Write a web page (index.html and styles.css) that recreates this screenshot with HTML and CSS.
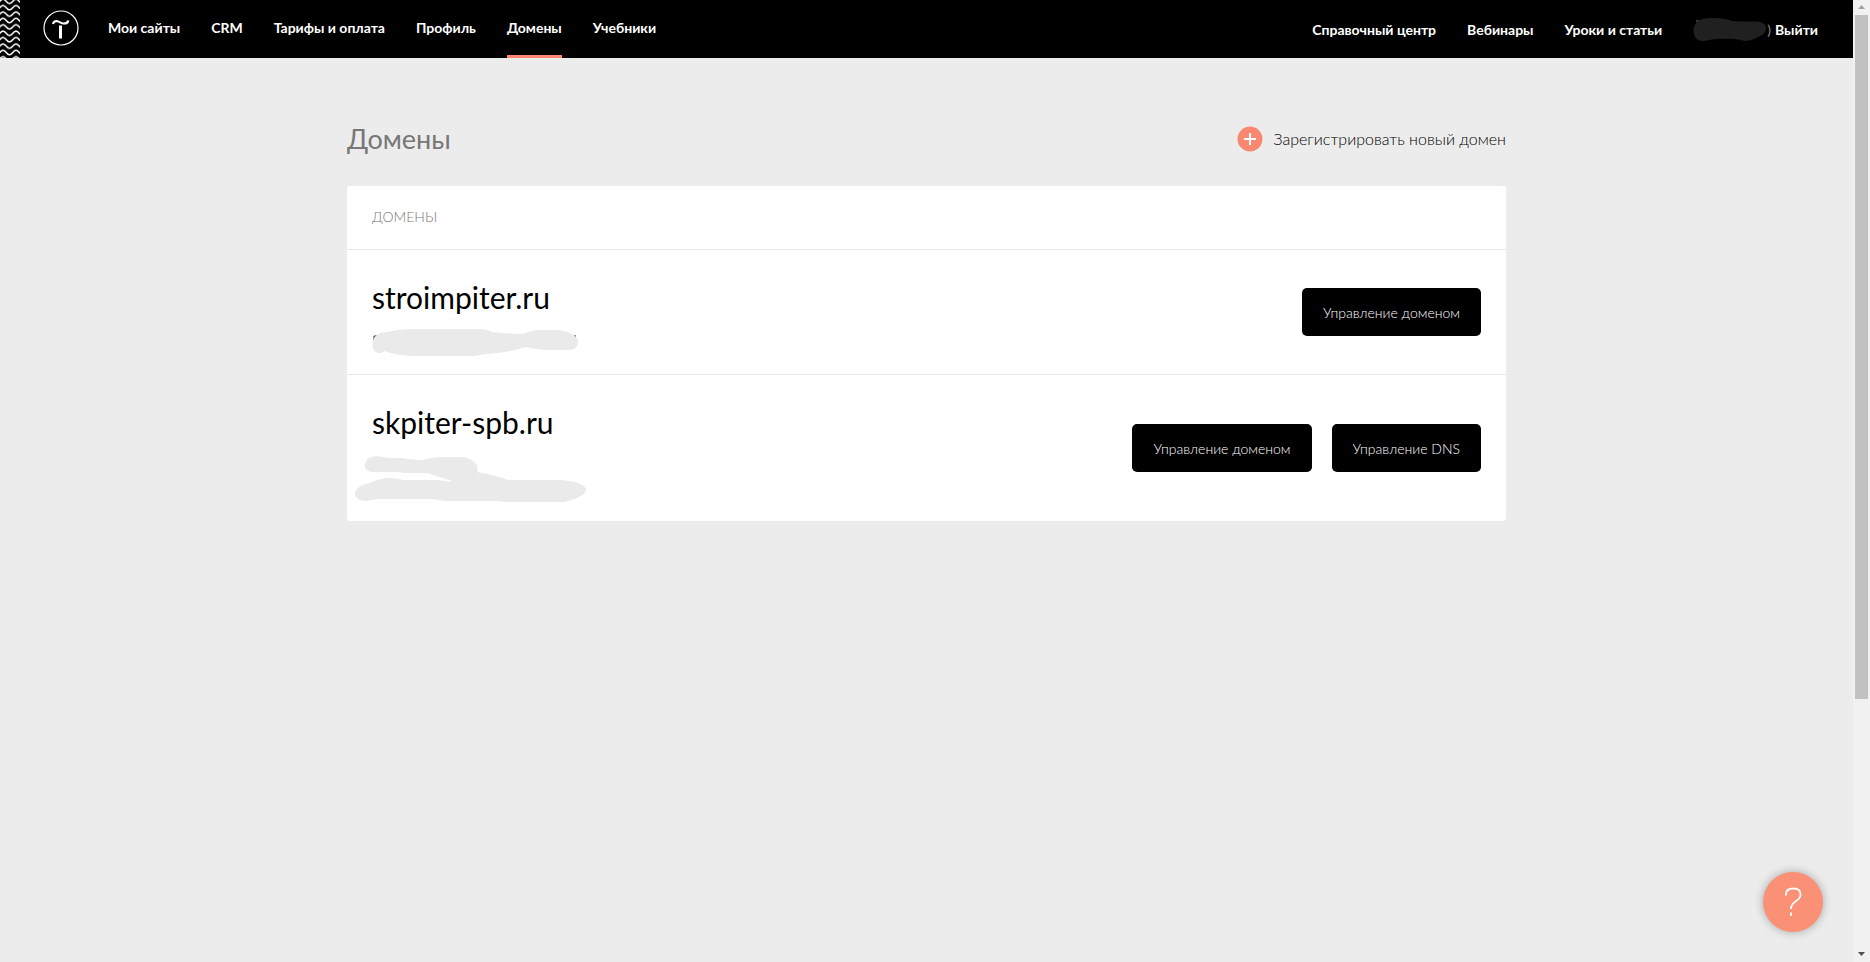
FILE: index.html
```
<!DOCTYPE html>
<html lang="ru">
<head>
<meta charset="utf-8">
<meta name="viewport" content="width=device-width, initial-scale=1">
<title>Домены</title>
<link rel="stylesheet" href="styles.css">
</head>
<body>
<div class="page">
  <header class="header">
    <svg class="header-waves" width="20" height="58" aria-hidden="true">
      <defs>
        <pattern id="waves" width="13" height="6.4" patternUnits="userSpaceOnUse" patternTransform="translate(3 4.500)">
          <path d="M0 1C3.200 1 3.300 5.400 6.500 5.400S9.800 1 13 1" fill="none" stroke="#fff" stroke-width="1.5"/>
        </pattern>
      </defs>
      <rect width="20" height="58" fill="url(#waves)"/>
    </svg>
    <a class="logo" href="#" aria-label="Главная">
      <svg width="36" height="36" viewBox="0 0 36 36" fill="none" stroke="#fff">
        <circle cx="18" cy="18" r="17" stroke-width="1.2"/>
        <path d="M10 14 C10.500 11.500 12.500 10.800 14.500 11.300 C17 12 18.500 13.700 21 13.500 C23.500 13.500 25 12.500 25.300 10.500" stroke-width="2.2"/>
        <path d="M17.500 15.500V28.500" stroke-width="3"/>
      </svg>
    </a>
    <nav class="nav nav-main">
      <a href="#">Мои сайты</a>
      <a href="#">CRM</a>
      <a href="#">Тарифы и оплата</a>
      <a href="#">Профиль</a>
      <a class="active" href="#">Домены</a>
      <a href="#">Учебники</a>
    </nav>
    <nav class="nav nav-side">
      <a href="#">Справочный центр</a>
      <a href="#">Вебинары</a>
      <a href="#">Уроки и статьи</a>
      <div class="user">
        <svg width="74" height="24" viewBox="0 0 74 24" aria-hidden="true">
          <path d="M3 3l3 0" stroke="#777"/>
          <path d="M10 1C18-1 31 0 39 3C50 4 60 3 68 4Q73 6 73 10Q73 15 67 18Q58 23 52 23Q46 21 40 21Q25 20 16 22Q6 25 2 19Q-1 12 2 7Q4 2 10 1Z" fill="#202020"/>
        </svg>
        <span class="paren">)</span>
        <a href="#">Выйти</a>
      </div>
    </nav>
  </header>
  <main class="content">
    <div class="title-row">
      <h1 class="title">Домены</h1>
      <a class="register" href="#">
        <svg width="26" height="26" viewBox="0 0 26 26" aria-hidden="true">
          <circle cx="13" cy="13" r="12.500" fill="#fa876f"/>
          <path d="M13 7v12M7 13h12" stroke="#fff" stroke-width="2"/>
        </svg>
        Зарегистрировать новый домен
      </a>
    </div>
    <section class="card">
      <h2 class="card-head">ДОМЕНЫ</h2>
      <article class="domain">
        <div class="info">
          <h3 class="name">stroimpiter.ru</h3>
          <svg class="note" width="210" height="28" viewBox="0 0 210 28" aria-hidden="true">
            <path d="M2 12V7H5M202 7h2" fill="none" stroke="#333"/>
            <path d="M1 19Q-1 11 5 6Q9 3 15 3Q27 0 38 0H110Q116 1 120 3Q136 5 151 5Q158 2 165 1H186Q196 2 201 6Q206 9 206 13Q206 20 197 21H172Q162 20 154 18Q141 22 126 24Q111 25 103 27H40Q23 26 12 22Q9 25 6 24Q2 23 1 19Z" fill="#eaeaea"/>
          </svg>
        </div>
        <div class="actions">
          <button class="btn" type="button">Управление доменом</button>
        </div>
      </article>
      <article class="domain">
        <div class="info">
          <h3 class="name">skpiter-spb.ru</h3>
          <svg class="note note-wide" width="234" height="48" viewBox="0 0 234 48" aria-hidden="true">
            <path d="M10 8Q11 1 21 0Q30 1 33 2H47Q59 4 68 4Q79 1 88 1H108Q115 2 119 6Q124 10 122 16Q140 19 153 24H207Q231 27 231 34Q230 41 209 46H150L140 45H89L78 43H21Q12 46 5 44Q-1 41 0 36Q3 29 15 27Q24 22 37 22L48 24H83L95 26L97 25L72 17H50L42 16H16Q8 13 10 8Z" fill="#eaeaea"/>
          </svg>
        </div>
        <div class="actions">
          <button class="btn" type="button">Управление доменом</button>
          <button class="btn" type="button">Управление DNS</button>
        </div>
      </article>
    </section>
  </main>
  <button class="help" type="button" aria-label="Помощь">
    <svg width="60" height="60" viewBox="0 0 60 60" fill="none" stroke="#fff" stroke-width="1.8" aria-hidden="true">
      <path d="M23 23.500V22C23 18.500 26 16.500 30.500 16.500C35 16.500 37.500 19 37.500 22.500C37.500 30 28 28 28 37M28 40.500V44"/>
    </svg>
  </button>
</div>
<div class="scrollbar" aria-hidden="true">
  <svg width="17" height="15"><path d="M5 9H12L8.500 5Z" fill="#a3a3a3"/></svg>
  <div class="track"><div class="thumb"></div></div>
  <svg width="17" height="17"><path d="M5 7H12L8.500 11Z" fill="#505050"/></svg>
</div>
</body>
</html>
```
FILE: styles.css
```
* {
  box-sizing: border-box;
}

body {
  display: flex;
  min-height: 100vh;
  margin: 0;
  background: #ececec;
  color: #000;
  font-family: Lato, "Open Sans", sans-serif;
}

a {
  color: inherit;
  text-decoration: none;
}

h1, h2, h3 {
  margin: 0;
  font-weight: 300;
}

.page {
  flex: 1;
}

.header {
  display: flex;
  height: 58px;
  background: #000;
  color: #fff;
}

.header-waves {
  flex: none;
}

.logo {
  display: flex;
  align-items: center;
  margin: 0 29px 2px 23px;
}

.nav {
  display: flex;
  gap: 31px;
  font-size: 14px;
  font-weight: 700;
  line-height: 20px;
  white-space: nowrap;
}

.nav-main a {
  padding-top: 18px;
}

.nav-main .active {
  border-bottom: 3px solid #fa876f;
}

.nav-side {
  align-items: center;
  margin-left: auto;
  padding: 2px 35px 0 0;
}

.user {
  display: flex;
  align-items: center;
}

.paren {
  margin-right: 4px;
  color: #888;
  font-weight: 400;
}

.content {
  max-width: 1159px;
  margin: 0 auto;
  padding-top: 59px;
}

.title-row {
  display: flex;
  justify-content: space-between;
  align-items: center;
  height: 44px;
  margin-bottom: 25px;
}

.title {
  color: #777;
  font-size: 27px;
  font-weight: 400;
  line-height: 40px;
}

.register {
  display: flex;
  align-items: center;
  gap: 10px;
  font-size: 16px;
  font-weight: 300;
  line-height: 24px;
}

.card {
  border-radius: 3px;
  background: #fff;
}

.card-head {
  padding: 19px 25px 20px;
  color: #777;
  font-size: 14px;
  line-height: 24px;
}

.domain {
  display: flex;
  justify-content: space-between;
  align-items: flex-start;
  padding: 25px 25px 17px;
  border-top: 1px solid #e8e8e8;
}

.name {
  font-size: 30px;
  font-weight: 400;
  line-height: 44px;
}

.note {
  display: block;
  margin-top: 10px;
}

.note-wide {
  margin: 12px 0 0 -17px;
}

.actions {
  display: flex;
  align-self: center;
  gap: 20px;
  padding-bottom: 8px;
}

.btn {
  height: 48px;
  padding: 0 21px;
  border: 0;
  border-radius: 5px;
  background: #000;
  color: #fff;
  font-family: inherit;
  font-size: 14px;
  font-weight: 300;
}

.help {
  position: fixed;
  right: 47px;
  bottom: 30px;
  width: 60px;
  height: 60px;
  padding: 0;
  border: 0;
  border-radius: 50%;
  background: #fa9176;
  box-shadow: 0 0 10px rgba(0, 0, 0, 0.3);
}

.scrollbar {
  display: flex;
  flex-direction: column;
  width: 17px;
  background: #f1f1f1;
}

.track {
  flex: 1;
  padding: 0 2px;
}

.thumb {
  height: 73.6%;
  background: #c1c1c1;
}
```
